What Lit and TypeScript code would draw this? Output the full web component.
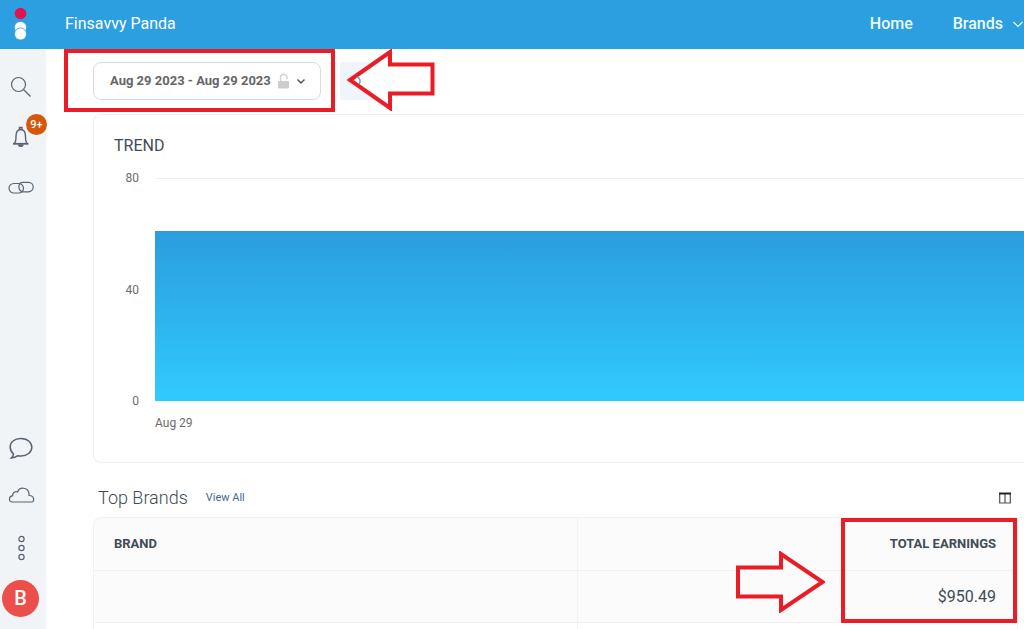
import { LitElement, html, css, svg } from "lit";
import { customElement, state } from "lit/decorators.js";

const icons = {
  search: svg`<circle cx="10.500" cy="9.500" r="7"/><path d="M15.500 14.500l7 7"/>`,
  bell: svg`<path d="M6.500 18.500c1.200-1.500 1.500-3 1.500-7C8 7 9.500 4.500 12.700 4.500S17.500 7 17.500 11.500c0 4 .3 5.500 1.500 7M11.500 4V2.500h2.500V4" stroke-width="1.400"/><path d="M5 18.800h15.500" stroke-width="1.800"/><path d="M10.500 20c.5 2 4 2 4.500 0z" fill="currentColor"/>`,
  link: svg`<rect x="1" y="8.500" width="14.500" height="9.500" rx="4.750"/><path d="M14 16.800h6.500a4.700 4.700 0 0 0 0-9.400H15c-5 0-5.500 7-1 9.400z"/>`,
  chat: svg`<path d="M5 18.500C.5 14.500.8 8.500 4.500 5.500c4-3.400 12-3.300 16 .2 4 3.600 3.700 9-.4 12.300-3 2.400-7 3-10.700 2.200-2 1.500-4 2.200-6.400 2.200 1.400-1.200 2-2.300 2-3.900z" transform="translate(.5 -.5)" stroke-width="1.500"/>`,
  cloud: svg`<path d="M4 17.500c-4.300 0-4-5.700.2-6.300-.4-3 2.500-4.700 4.900-3.700 1.900-5.500 10.200-5 11.400 1.300v2.200c5.600-.3 5.800 6.500 2.600 6.500z" transform="translate(.5 -1.500)"/>`,
  dots: svg`<circle cx="13.500" cy="3" r="2.600"/><circle cx="13.500" cy="12" r="2.600"/><circle cx="13.500" cy="21" r="2.600"/>`,
};

const topItems = [
  { id: "search", label: "Search", icon: icons.search },
  { id: "alerts", label: "Notifications", icon: icons.bell, badge: "9+" },
  { id: "links", label: "Links", icon: icons.link },
];
const bottomItems = [
  { id: "chat", label: "Messages", icon: icons.chat },
  { id: "cloud", label: "Cloud", icon: icons.cloud },
  { id: "more", label: "More", icon: icons.dots },
];

@customElement("side-rail")
class SideRail extends LitElement {
  static styles = css`
    :host {
      display: flex;
      flex-direction: column;
      justify-content: space-between;
      width: 46px;
      flex: none;
      box-sizing: border-box;
      padding: 13px 0 6px;
      background: #f0f4f7;
      font-family: Roboto, "Liberation Sans", sans-serif;
    }
    .group {
      display: flex;
      flex-direction: column;
    }
    .item {
      position: relative;
      display: grid;
      place-items: center;
      height: 50px;
      padding: 0 5px 0 0;
      border: 0;
      background: none;
      color: #596371;
      font-family: inherit;
      cursor: pointer;
    }
    .icon {
      width: 26px;
      height: 24px;
      fill: none;
      stroke: currentColor;
      stroke-width: 1.2;
      overflow: visible;
    }
    .badge {
      position: absolute;
      top: 2px;
      left: 26px;
      width: 21px;
      height: 21px;
      border-radius: 50%;
      background: #d4570c;
      color: #fff;
      font-size: 11px;
      font-weight: 500;
      line-height: 22px;
      text-align: center;
    }
    .avatar {
      width: 37px;
      height: 37px;
      border-radius: 50%;
      background: #ec4f4a;
      color: #fff;
      font-size: 20px;
      font-weight: 500;
      line-height: 37px;
      text-align: center;
    }
  `;

  item(i: { label: string; icon: unknown; badge?: string }) {
    return html`<button class="item" aria-label=${i.label}>
      <svg class="icon" viewBox="0 0 26 24">${i.icon}</svg>
      ${i.badge ? html`<span class="badge">${i.badge}</span>` : ""}
    </button>`;
  }

  render() {
    return html`
      <div class="group">${topItems.map((i) => this.item(i))}</div>
      <div class="group">
        ${bottomItems.map((i) => this.item(i))}
        <button class="item" aria-label="Account"><span class="avatar">B</span></button>
      </div>
    `;
  }
}

@customElement("trend-chart")
class TrendChart extends LitElement {
  @state() max = 80;
  @state() points = [{ day: "Aug 29", value: 61 }];

  static styles = css`
    :host {
      display: block;
      box-sizing: border-box;
      padding: 21px 0 31px 20px;
      border: 1px solid #eceeef;
      border-right: 0;
      border-radius: 8px 0 0 8px;
      font-family: Roboto, "Liberation Sans", sans-serif;
      color: #6b6b6b;
    }
    .title {
      margin: 0 0 22px;
      font-size: 16px;
      line-height: 20px;
      font-weight: 400;
      color: #414b56;
    }
    .chart {
      display: grid;
      grid-template-columns: 25px 1fr;
      column-gap: 16px;
      font-size: 12px;
      line-height: 16px;
    }
    .axis {
      display: flex;
      flex-direction: column;
      justify-content: space-between;
      margin: -8px 0;
      text-align: right;
    }
    .plot {
      display: flex;
      align-items: flex-end;
      height: 223px;
      background: linear-gradient(#eceeef, #eceeef) 0 0 / 100% 1px no-repeat,
        linear-gradient(#eceeef, #eceeef) 0 50% / 100% 1px no-repeat;
    }
    .bar {
      flex: 1;
      background: linear-gradient(#2b9ddf, #30caff);
    }
    .days {
      grid-column: 2;
      display: flex;
      margin-top: 14px;
    }
    .day {
      flex: 1;
    }
  `;

  render() {
    return html`
      <h2 class="title">TREND</h2>
      <div class="chart">
        <div class="axis">
          <span>${this.max}</span><span>${this.max / 2}</span><span>0</span>
        </div>
        <div class="plot">
          ${this.points.map(
            (p) => html`<div class="bar" style="height:${(p.value / this.max) * 100}%"></div>`,
          )}
        </div>
        <div class="days">
          ${this.points.map((p) => html`<span class="day">${p.day}</span>`)}
        </div>
      </div>
    `;
  }
}

@customElement("app-root")
class AppRoot extends LitElement {
  static styles = css`
    :host {
      display: flex;
      flex-direction: column;
      height: 100vh;
      overflow: hidden;
      background: #fff;
      font-family: Roboto, "Liberation Sans", sans-serif;
      color: #414b56;
    }
    .header {
      display: flex;
      align-items: center;
      flex: none;
      height: 48px;
      padding-bottom: 1px;
      background: #2b9fe0;
      color: #fff;
    }
    .logo {
      width: 14px;
      height: 36px;
      margin: 0 38px 0 13px;
    }
    .account {
      flex: 1;
      font-size: 16px;
      line-height: 20px;
    }
    .nav {
      display: flex;
      gap: 40px;
      font-size: 16px;
      line-height: 20px;
      font-weight: 500;
    }
    .nav-link {
      display: flex;
      align-items: center;
      gap: 9px;
      color: #eefaff;
      text-decoration: none;
    }
    .caret {
      width: 12px;
      height: 8px;
      fill: none;
      stroke: currentColor;
      stroke-width: 1.2;
    }
    .body {
      display: flex;
      flex: 1;
      min-height: 0;
    }
    .main {
      flex: 1;
      min-width: 0;
      padding: 13px 0 0 47px;
      overflow: hidden;
    }
    .toolbar {
      display: flex;
      gap: 19px;
      margin-bottom: 14px;
    }
    .range {
      position: relative;
    }
    .range-button {
      display: flex;
      align-items: center;
      gap: 6px;
      height: 38px;
      padding: 0 14px 0 16px;
      border: 1px solid #d9dcdf;
      border-radius: 8px;
      background: #fff;
      color: #666;
      font: 700 13px/20px Roboto, "Liberation Sans", sans-serif;
    }
    .lock {
      width: 13px;
      height: 16px;
    }
    .chevron {
      width: 10px;
      height: 8px;
      fill: none;
      stroke: #555;
      stroke-width: 1.5;
    }
    .refresh {
      position: relative;
      display: grid;
      place-items: center;
      width: 42px;
      height: 38px;
      padding: 0;
      border: 0;
      border-radius: 4px;
      background: #f0f5fa;
    }
    .refresh-icon {
      z-index: 1;
      width: 12px;
      height: 12px;
      fill: none;
      stroke: #4fb0e6;
      stroke-width: 1.6;
      overflow: visible;
    }
    .frame {
      position: absolute;
      box-sizing: border-box;
      border: 4px solid #ea1d26;
      pointer-events: none;
    }
    .frame-range {
      inset: -13px -14px -12px -29px;
    }
    .frame-total {
      top: 0;
      right: 0;
      width: 176px;
      height: 105px;
    }
    .arrow {
      position: absolute;
      width: 90px;
      height: 62px;
      fill: #fff;
      stroke: #ea1d26;
      stroke-width: 4;
      pointer-events: none;
    }
    .arrow-range {
      top: -13px;
      left: 6px;
    }
    .arrow-total {
      top: 33px;
      right: 192px;
      fill: #fbfbfb;
    }
    .section-head {
      display: flex;
      align-items: center;
      gap: 18px;
      margin: 23px 13px 7px 5px;
    }
    .section-title {
      margin: 0;
      font-size: 18px;
      line-height: 24px;
      font-weight: 300;
    }
    .view-all {
      flex: 1;
      color: #44698c;
      font-size: 11px;
      line-height: 16px;
      text-decoration: none;
    }
    .columns {
      display: flex;
      padding: 0;
      border: 0;
      background: none;
    }
    .columns-icon {
      width: 12px;
      height: 12px;
    }
    .brands {
      width: 100%;
      table-layout: fixed;
      border-collapse: separate;
      border-spacing: 0;
      border-top: 1px solid #f0f1f2;
      border-left: 1px solid #f0f1f2;
      border-radius: 8px 0 0 0;
    }
    .brand-col {
      width: 52%;
    }
    .rest-col {
      width: 6px;
    }
    .cell {
      box-sizing: border-box;
      height: 52px;
      padding: 0 21px 0 20px;
      border-right: 1px solid #f3f3f4;
      border-bottom: 1px solid #f1f1f2;
      background: #fbfbfb;
      text-align: left;
      font-size: 16px;
      line-height: 20px;
    }
    .label {
      position: relative;
      height: 53px;
      font-size: 13px;
      font-weight: 700;
    }
    .amount {
      text-align: right;
    }
    .plain {
      background: #fff;
    }
    .rest {
      padding: 0;
      border-right: 0;
      border-bottom: 0;
    }
    .label:first-child {
      border-top-left-radius: 8px;
    }
  `;

  render() {
    return html`
      <header class="header">
        <svg class="logo" viewBox="0 0 14 36" aria-hidden="true">
          <circle cx="7.500" cy="7.500" r="5.800" fill="#e0134f" />
          <circle cx="7.500" cy="21.500" r="5.800" fill="#fff" />
          <circle cx="7.500" cy="28" r="6" fill="#fff" stroke="#2b9fe0" stroke-width=".8" />
        </svg>
        <span class="account">Finsavvy Panda</span>
        <nav class="nav">
          <a class="nav-link" href="#home">Home</a>
          <a class="nav-link" href="#brands">Brands
            <svg class="caret" viewBox="0 0 12 8"><path d="M1.500 2L6 6.500L10.500 2" /></svg>
          </a>
        </nav>
      </header>
      <div class="body">
        <side-rail></side-rail>
        <main class="main">
          <div class="toolbar">
            <div class="range">
              <button class="range-button">
                Aug 29 2023 - Aug 29 2023
                <svg class="lock" viewBox="0 0 13 16">
                  <path d="M3.500 8V4.500a3.200 3.200 0 0 1 6.400 0V6" fill="none" stroke="#d3d3d6" stroke-width="1.500" />
                  <rect x="1" y="8" width="11" height="7.500" rx="1" fill="#cdcdd1" />
                </svg>
                <svg class="chevron" viewBox="0 0 10 8"><path d="M1.500 2.500L5 6l3.500-3.500" /></svg>
              </button>
              <span class="frame frame-range"></span>
            </div>
            <button class="refresh" aria-label="Refresh">
              <svg class="refresh-icon" viewBox="0 0 12 12"><path d="M1.500 2A4.200 4.200 0 0 1 4 9" /></svg>
              <svg class="arrow arrow-range" viewBox="0 0 90 62">
                <path d="M4 31L44 3v12.500h42.500v29H44V59z" />
              </svg>
            </button>
          </div>
          <trend-chart></trend-chart>
          <div class="section-head">
            <h2 class="section-title">Top Brands</h2>
            <a class="view-all" href="#all">View All</a>
            <button class="columns" aria-label="Choose columns">
              <svg class="columns-icon" viewBox="0 0 12 12">
                <path d="M.7 1.500h10.600v9.500H.7zM6 1.500V11" fill="none" stroke="#55524a" stroke-width="1.200" />
                <path d="M0 1.500h12" stroke="#222" stroke-width="2" />
              </svg>
            </button>
          </div>
          <table class="brands">
            <colgroup>
              <col class="brand-col" />
              <col />
              <col class="rest-col" />
            </colgroup>
            <thead>
              <tr>
                <th class="cell label">BRAND</th>
                <th class="cell label amount">
                  TOTAL EARNINGS
                  <span class="frame frame-total"></span>
                  <svg class="arrow arrow-total" viewBox="0 0 90 62">
                    <path d="M3 16.500h43V3L87.500 31L46 59V45.500H3z" />
                  </svg>
                </th>
                <td class="cell plain rest"></td>
              </tr>
            </thead>
            <tbody>
              <tr>
                <td class="cell"></td>
                <td class="cell amount">$950.49</td>
                <td class="cell plain rest"></td>
              </tr>
              <tr>
                <td class="cell plain"></td>
                <td class="cell plain amount"></td>
                <td class="cell plain rest"></td>
              </tr>
            </tbody>
          </table>
        </main>
      </div>
    `;
  }
}
